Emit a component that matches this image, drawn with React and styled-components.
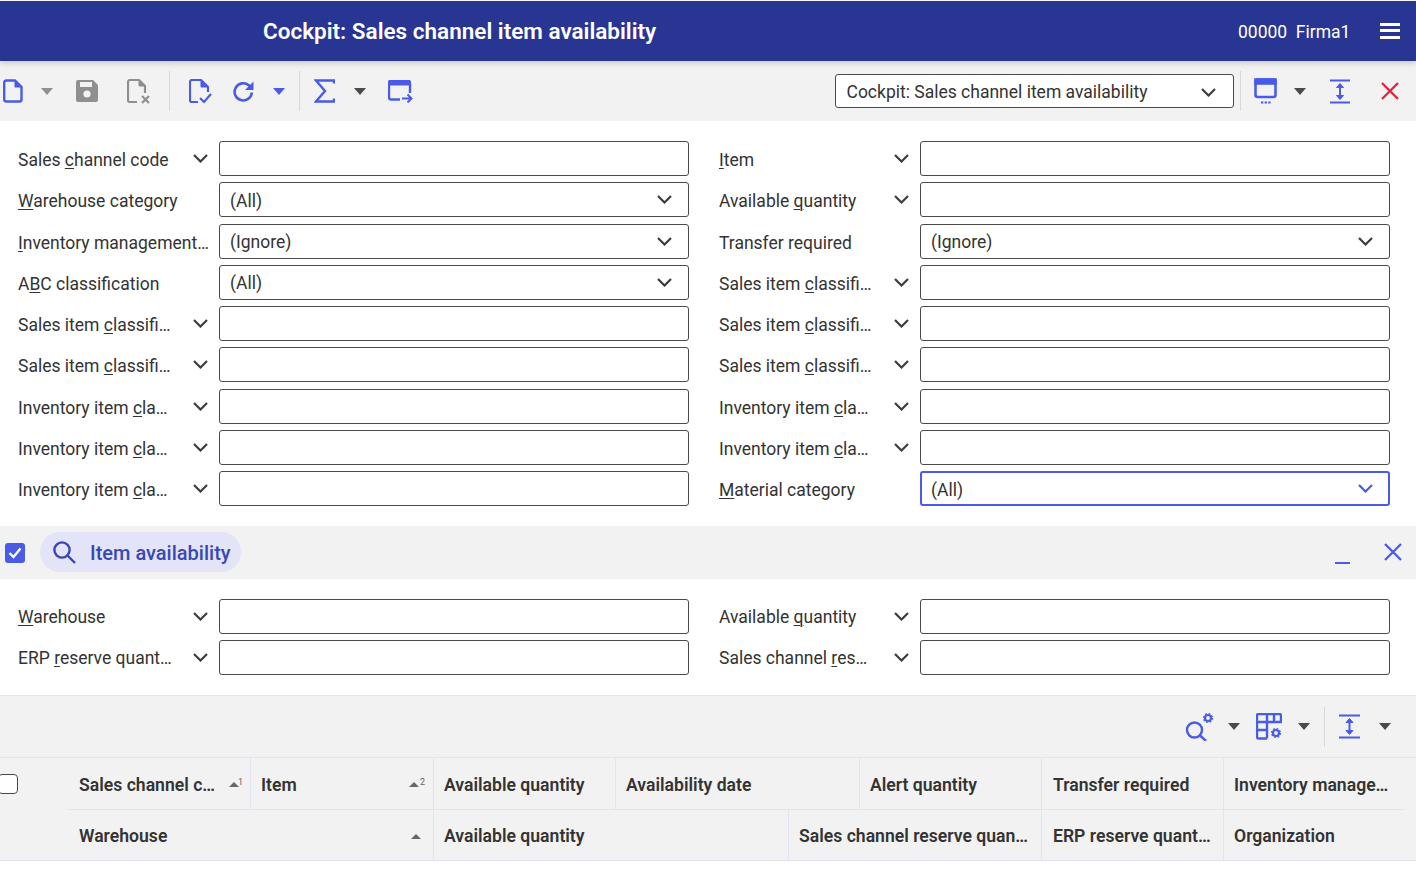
import React from "react";
import styled, { createGlobalStyle } from "styled-components";

const Global = createGlobalStyle`
  html, body { margin: 0; padding: 0; background: #fff; overflow: hidden; }
  * { box-sizing: border-box; }
  body { font-family: Roboto, "Liberation Sans", sans-serif; color: #333; }
`;
const BLUE = "#4a5be6";
const Page = styled.div`width: 1416px; height: 870px; position: relative; overflow: hidden; background: #fff;`;
const Header = styled.header`
  height: 60px; margin-top: 1px; background: #293593; color: #fff; display: flex; align-items: center;
  position: relative; z-index: 2; box-shadow: 0 2px 6px rgba(0,0,0,.18);
`;
const Title = styled.h1`
  margin: 0 0 0 263px; font-size: 22.5px; font-weight: 600; width: 960px; white-space: nowrap; padding-bottom: 1px;
`;
const Company = styled.div`
  font-size: 17.5px; width: 142px; margin-left: 15px; white-space: pre; padding-top: 1px;
`;
const Burger = styled.div`
  width: 20px; height: 16px; border-top: 3px solid #fff; border-bottom: 3px solid #fff; position: relative;
  &::after { content: ""; position: absolute; left: 0; right: 0; top: 3px; height: 3px; background: #fff; }
`;
const Toolbar = styled.div`
  height: ${p => p.$h}px; background: #f2f2f2; display: flex; align-items: center; position: relative;
`;
const Tool = styled.span`
  display: inline-flex; margin-left: ${p => p.$ml || 0}px; flex: none;
`;
const Caret = styled.span`
  flex: none; width: 0; height: 0; margin-left: ${p => p.$ml || 0}px;
  border-left: 6.5px solid transparent; border-right: 6.5px solid transparent;
  border-top: 7px solid ${p => p.$c || "#4a4a4a"};
`;
const Sep = styled.span`
  flex: none; width: 1px; height: 40px; background: #d9d9d9; margin-left: ${p => p.$ml || 0}px;
`;
const ViewSelect = styled.div`
  flex: none; width: 399px; height: 34px; margin-left: ${p => p.$ml}px; background: #fff; border: 1px solid #4a4a4a; border-radius: 3px;
  display: flex; align-items: center; justify-content: space-between; padding: 2px 17px 0 10.5px; font-size: 17.5px; color: #333;
`;
const Form = styled.div`
  padding: ${p => p.$pt}px 26px 0 18px; display: grid; grid-template-columns: 671px 671px; column-gap: 30px; row-gap: ${p => p.$gap || "6.25px"};
`;
const Row = styled.div`display: flex; align-items: center; height: 35px;`;
const Label = styled.div`
  width: 170px; font-size: 17.5px; line-height: 22px; white-space: nowrap; color: #333; flex: none; padding-top: ${p => p.$low ? 3 : 1}px;
  u { text-underline-offset: 2px; text-decoration-thickness: 1px; }
`;
const ChevBox = styled.span`width: 31px; flex: none; display: flex; justify-content: flex-start; padding-left: 4.5px;`;
const Input = styled.div`
  width: 470px; height: 35px; flex: none; background: #fff; border: ${p => p.$focus ? `2px solid ${BLUE}` : "1px solid #4a4a4a"}; border-radius: 3px;
  display: flex; align-items: center; justify-content: space-between; padding: 2px ${p => p.$focus ? 15 : 16}px 0 ${p => p.$focus ? 9 : 10}px; font-size: 17.5px; color: #333;
  svg { margin-top: -2px; }
`;
const SectionBar = styled.div`
  position: absolute; left: 0; right: 0; top: 526px; height: 53px; background: #f2f2f2; display: flex; align-items: center;
`;
const Check = styled.span`
  width: 20px; height: 20px; margin-left: 5px; border-radius: 3px; background: ${BLUE}; display: flex; align-items: center; justify-content: center;
`;
const Pill = styled.div`
  margin: 0 0 1px 15px; width: 201px; height: 40px; border-radius: 20px; background: #e3e4f8; display: flex; align-items: center; padding-left: 13px;
  color: #3947b5; font-size: 20px; font-weight: 500; gap: 14px;
`;
const PillText = styled.span`margin-top: 2px;`;
const Minimize = styled.span`position: absolute; left: 1335px; top: 36px; width: 15px; height: 2px; background: ${BLUE};`;
const CloseSlot = styled.span`position: absolute; left: 1384px; top: 17px; display: flex;`;
const FilterArea = styled.div`position: absolute; left: 0; right: 0; top: 579px; height: 117px; border-bottom: 1px solid #e3e3f5;`;
const GridToolbar = styled.div`
  position: absolute; left: 0; right: 0; top: 696px; height: 62px; background: #f2f2f2; display: flex; align-items: center;
  border-bottom: 1px solid #e3e3f5; padding-left: 1185px;
`;
const GridHead = styled.div`
  position: absolute; left: 0; right: 0; top: 758px; height: 103px; background: #f2f2f2; border-bottom: 1px solid #e3e3f5;
`;
const HeadRow = styled.div`
  position: absolute; left: 68px; width: 1336px; top: ${p => p.$top}px; height: ${p => p.$h}px; display: flex;
  ${p => p.$line && "border-bottom: 1px solid #e3e3f5;"}
`;
const HeadCell = styled.div`
  width: ${p => p.$w}px; flex: none; padding-left: ${p => p.$pl ?? 10}px; display: flex; align-items: center; font-size: 17.6px; font-weight: 600; color: #333;
  white-space: nowrap; position: relative; ${p => !p.$noLine && "border-right: 1px solid #e3e3f5;"}
  padding-top: ${p => p.$low ? 3 : 1}px;
`;
const Sort = styled.span`
  position: absolute; right: ${p => p.$r}px; top: 24px; width: 0; height: 0; border-left: 5.5px solid transparent; border-right: 5.5px solid transparent; border-bottom: 5px solid #666;
`;
const SortNum = styled.span`
  position: absolute; right: ${p => p.$r}px; top: 19px; font-size: 9px; line-height: 10px; color: #666; font-weight: 400;
`;
const RowCheck = styled.span`
  position: absolute; left: -2px; top: 16px; width: 20px; height: 20px; background: #fff; border: 1px solid #4a4a4a; border-radius: 4px;
`;

const S = ({ w, h, vb, children, ...r }) => (
  <svg width={w} height={h} viewBox={vb || `0 0 ${w} ${h}`} fill="none" stroke={BLUE} strokeWidth="2.4" {...r}>{children}</svg>
);
const Chev = ({ c = "#3d3d3d" }) => (
  <svg width="15" height="9" viewBox="0 0 15 9" fill="none" stroke={c} strokeWidth="2.2"><path d="M1 1 L7.5 7.5 L14 1" /></svg>
);
const Doc = () => <S w={20} h={24}><path d="M3 1.5h9l6.5 6.5v12.5a2 2 0 0 1-2 2H3a2 2 0 0 1-1.8-2V3a2 2 0 0 1 1.8-1.5z" /><path d="M12 1.5v6.5h6.5" fill={BLUE} strokeWidth="1" /></S>;
const Save = () => (
  <svg width="24" height="24" viewBox="0 0 24 24"><path fill="#8f8f8f" d="M3 1h15l5 5v15a2 2 0 0 1-2 2H3a2 2 0 0 1-2-2V3a2 2 0 0 1 2-2z" /><rect x="5" y="3" width="12" height="5" fill="#f2f2f2" /><circle cx="12" cy="15" r="3.6" fill="#f2f2f2" /></svg>
);
const DocX = () => (
  <svg width="24" height="25" viewBox="0 0 24 25" fill="none" stroke="#8f8f8f" strokeWidth="2.2">
    <path d="M10 23H3a1.8 1.8 0 0 1-2-2V3a2 2 0 0 1 2-2h9l6 6v7" /><path d="M12 1v6h6" fill="#8f8f8f" strokeWidth="1" />
    <path d="M15 17l7 7M22 17l-7 7" />
  </svg>
);
const DocCheck = () => (
  <svg width="23" height="25" viewBox="0 0 23 25" fill="none" stroke={BLUE} strokeWidth="2.2">
    <path d="M9 23H3a1.8 1.8 0 0 1-2-2V3a2 2 0 0 1 2-2h9l7 7v5" /><path d="M12 1v7h7" fill={BLUE} strokeWidth="1" />
    <path d="M11 19l4 4 7-8" />
  </svg>
);
const Refresh = () => (
  <svg width="21" height="21" viewBox="0 0 21 21" fill="none" stroke={BLUE} strokeWidth="2.6">
    <path d="M18.8 11.5a8.6 8.6 0 1 1-3-7.2L18 6.5" /><path d="M20.5 0.5V9h-8.5z" fill={BLUE} stroke="none" />
  </svg>
);
const Sigma = () => <S w={21} h={24}><path d="M20 4.5V1.5H2l9 10.5-9 10.5h18v-3" strokeWidth="2.4" /></S>;
const WindowArrow = () => (
  <svg width="25" height="23" viewBox="0 0 25 23" fill="none" stroke={BLUE} strokeWidth="2.4">
    <path d="M12 19.5H3a2 2 0 0 1-2-2V3a2 2 0 0 1 2-2h17a2 2 0 0 1 2 2v10" /><rect x="1" y="1" width="21" height="4" fill={BLUE} strokeWidth="1" />
    <path d="M14 18.5h9M19.5 14.5l4 4-4 4" strokeWidth="2" />
  </svg>
);
const WindowDots = () => (
  <svg width="24" height="26" viewBox="0 0 24 26" fill="none" stroke={BLUE} strokeWidth="2.6">
    <rect x="1.5" y="1.5" width="20" height="17.5" rx="2" /><rect x="1.5" y="1.5" width="20" height="4" fill={BLUE} />
    <path d="M7 24.5h2.4M10.6 24.5h2.4M14.2 24.5h2.4" strokeWidth="1.8" />
  </svg>
);
const Height = ({ w = 20 }) => (
  <svg width={w} height="25" viewBox={`0 0 ${w} 25`} fill="none" stroke={BLUE} strokeWidth="2">
    <path d={`M0 1.5h${w}M0 23.5h${w}`} /><path d={`M${w / 2} 5v15`} />
    <path d={`M${w / 2 - 3.5} 8.5L${w / 2} 4.5L${w / 2 + 3.5} 8.5z M${w / 2 - 3.5} 16.5L${w / 2} 20.5L${w / 2 + 3.5} 16.5z`} fill={BLUE} strokeWidth="1" />
  </svg>
);
const Cross = ({ c = BLUE, s = 18 }) => (
  <svg width={s} height={s} viewBox="0 0 18 18" fill="none" stroke={c} strokeWidth="2.3"><path d="M1 1l16 16M17 1L1 17" /></svg>
);
const Gear = ({ x, y }) => (
  <g transform={`translate(${x} ${y})`}>
    <circle r="3" fill="none" stroke={BLUE} strokeWidth="2.2" />
    <circle r="4.4" fill="none" stroke={BLUE} strokeWidth="1.4" strokeDasharray="1.8 1.65" />
  </g>
);
const SearchGear = () => (
  <svg width="29" height="29" viewBox="0 0 29 29" fill="none" stroke={BLUE} strokeWidth="2.4">
    <circle cx="9.5" cy="18" r="7.5" /><path d="M15 23.5l6 5.5" /><Gear x={23} y={6} />
  </svg>
);
const TableGear = () => (
  <svg width="26" height="27" viewBox="0 0 26 27" fill="none" stroke={BLUE} strokeWidth="2.4">
    <path d="M11 25.5H2.5A1.5 1.5 0 0 1 1 24V2.5A1.5 1.5 0 0 1 2.5 1h21A1.5 1.5 0 0 1 25 2.5V9H1M1 17h10M11 1v24.5" />
    <path d="M18 1v8" /><Gear x={20} y={20} />
  </svg>
);
const Search = () => (
  <svg width="23" height="23" viewBox="0 0 23 23" fill="none" stroke="#3947b5" strokeWidth="2.4"><circle cx="9" cy="9" r="7.6" /><path d="M14.5 14.5l7.5 7.5" /></svg>
);

const u = (a, b, c) => <>{a}<u>{b}</u>{c}</>;
const top = [
  [u("Sales ", "c", "hannel code"), "chev", ""], [u("", "I", "tem"), "chev", ""],
  [u("", "W", "arehouse category"), "", "(All)"], [u("Available ", "q", "uantity"), "chev", ""],
  [u("", "I", "nventory management…"), "", "(Ignore)"], ["Transfer required", "", "(Ignore)"],
  [u("A", "B", "C classification"), "", "(All)"], [u("Sales item ", "c", "lassifi…"), "chev", ""],
  [u("Sales item ", "c", "lassifi…"), "chev", ""], [u("Sales item ", "c", "lassifi…"), "chev", ""],
  [u("Sales item ", "c", "lassifi…"), "chev", ""], [u("Sales item ", "c", "lassifi…"), "chev", ""],
  [u("Inventory item ", "c", "la…"), "chev", ""], [u("Inventory item ", "c", "la…"), "chev", ""],
  [u("Inventory item ", "c", "la…"), "chev", ""], [u("Inventory item ", "c", "la…"), "chev", ""],
  [u("Inventory item ", "c", "la…"), "chev", ""], [u("", "M", "aterial category"), "", "(All)", true],
];
const bottom = [
  [u("", "W", "arehouse"), "chev", ""], [u("Available ", "q", "uantity"), "chev", ""],
  [u("ERP ", "r", "eserve quant…"), "chev", ""], [u("Sales channel ", "r", "es…"), "chev", ""],
];
const Field = ({ f, low }) => (
  <Row>
    <Label $low={low}>{f[0]}</Label>
    <ChevBox>{f[1] && <Chev />}</ChevBox>
    <Input $focus={f[3]}>
      <span>{f[2]}</span>
      {f[2] && <Chev c={f[3] ? BLUE : "#3d3d3d"} />}
    </Input>
  </Row>
);

export default function App() {
  return (
    <Page>
      <Global />
      <Header>
        <Title>Cockpit: Sales channel item availability</Title>
        <Company>{"00000  Firma1"}</Company>
        <Burger />
      </Header>
      <Toolbar $h={60}>
        <Tool $ml={3}><Doc /></Tool>
        <Caret $ml={18} $c="#909090" />
        <Tool $ml={22}><Save /></Tool>
        <Tool $ml={28}><DocX /></Tool>
        <Sep $ml={18} />
        <Tool $ml={19}><DocCheck /></Tool>
        <Tool $ml={21}><Refresh /></Tool>
        <Caret $ml={19} $c={BLUE} />
        <Sep $ml={14} />
        <Tool $ml={14}><Sigma /></Tool>
        <Caret $ml={19} />
        <Tool $ml={22}><WindowArrow /></Tool>
        <ViewSelect $ml={422}>
          <span>Cockpit: Sales channel item availability</span><Chev />
        </ViewSelect>
        <Sep $ml={6} />
        <Tool $ml={13}><WindowDots /></Tool>
        <Caret $ml={16} />
        <Tool $ml={24}><Height /></Tool>
        <Tool $ml={31}><Cross c="#e0243c" /></Tool>
      </Toolbar>
      <Form $pt={20}>
        {top.map((f, i) => <Field key={i} f={f} low />)}
      </Form>
      <SectionBar>
        <Check>
          <svg width="14" height="12" viewBox="0 0 14 12" fill="none" stroke="#fff" strokeWidth="2.4"><path d="M1.5 6l4 4 7-8.5" /></svg>
        </Check>
        <Pill><Search /><PillText>Item availability</PillText></Pill>
        <Minimize />
        <CloseSlot><Cross /></CloseSlot>
      </SectionBar>
      <FilterArea>
        <Form $pt={20} $gap="6px">
          {bottom.map((f, i) => <Field key={i} f={f} />)}
        </Form>
      </FilterArea>
      <GridToolbar>
        <Tool><SearchGear /></Tool>
        <Caret $ml={14} />
        <Tool $ml={16}><TableGear /></Tool>
        <Caret $ml={16} />
        <Sep $ml={14} />
        <Tool $ml={14}><Height w={21} /></Tool>
        <Caret $ml={19} />
      </GridToolbar>
      <GridHead>
        <RowCheck />
        <HeadRow $top={0} $h={52} $line>
          <HeadCell $low $w={183} $pl={11}>Sales channel c…<Sort $r={11} /><SortNum $r={7}>1</SortNum></HeadCell>
          <HeadCell $low $w={183}>Item<Sort $r={14} /><SortNum $r={8}>2</SortNum></HeadCell>
          <HeadCell $low $w={182}>Available quantity</HeadCell>
          <HeadCell $low $w={244}>Availability date</HeadCell>
          <HeadCell $low $w={182}>Alert quantity</HeadCell>
          <HeadCell $low $w={182} $pl={11}>Transfer required</HeadCell>
          <HeadCell $low $w={180} $noLine>Inventory manage…</HeadCell>
        </HeadRow>
        <HeadRow $top={52} $h={50}>
          <HeadCell $w={366} $pl={11}>Warehouse<Sort $r={12} /></HeadCell>
          <HeadCell $w={355}>Available quantity</HeadCell>
          <HeadCell $w={253}>Sales channel reserve quan…</HeadCell>
          <HeadCell $w={182} $pl={11}>ERP reserve quant…</HeadCell>
          <HeadCell $w={180} $noLine>Organization</HeadCell>
        </HeadRow>
      </GridHead>
    </Page>
  );
}
